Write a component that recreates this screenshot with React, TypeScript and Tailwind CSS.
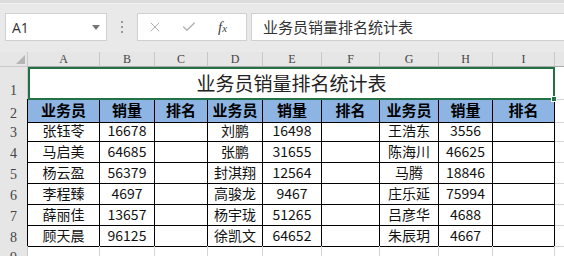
import { ChevronDown, Check, X } from 'lucide-react'

const GRID = 'grid grid-cols-[28px_72px_55px_53px_55px_59px_58px_59px_54px_62px_1fr]'
const CJK = "font-['Noto_Sans_CJK_SC',sans-serif]"

const letters = ['A', 'B', 'C', 'D', 'E', 'F', 'G', 'H', 'I']

const rows = [
  ['张钰苓', '16678', '刘鹏', '16498', '王浩东', '3556'],
  ['马启美', '64685', '张鹏', '31655', '陈海川', '46625'],
  ['杨云盈', '56379', '封淇翔', '12564', '马腾', '18846'],
  ['李程臻', '4697', '高骏龙', '9467', '庄乐延', '75994'],
  ['薛丽佳', '13657', '杨宇珑', '51265', '吕彦华', '4688'],
  ['顾天晨', '96125', '徐凯文', '64652', '朱辰玥', '4667'],
]

function RowHead({ n, dark }: { n: number; dark?: boolean }) {
  return (
    <div
      className={`bg-[#e6e6e6] border-b border-[#c8c8c8] border-r ${dark ? 'border-r-black' : 'border-r-[#c8c8c8]'} flex items-end justify-center pb-[1px] text-[14px] leading-none text-[#444] font-['Liberation_Serif',serif]`}
    >
      {n}
    </div>
  )
}

function Cell({ children, bold }: { children?: React.ReactNode; bold?: boolean }) {
  return (
    <div
      className={`border-r border-b border-black flex items-center justify-center ${CJK} ${
        bold ? 'bg-[#8db4e2] font-bold text-[15px] text-black' : 'text-[14px] text-[#111]'
      }`}
    >
      {children}
    </div>
  )
}

export default function App() {
  return (
    <div className="w-[564px] h-[256px] overflow-hidden bg-[#e9e9e9] flex flex-col">
      {/* Formula bar */}
      <div className="h-[4px] bg-[#dcdcdc] border-b border-[#f4f4f4] shrink-0" />
      <div className="h-[48px] shrink-0 flex items-start pt-[9px] pl-[5px] gap-0">
        <div className="w-[102px] h-[28px] bg-white border border-[#d0d0d0] flex items-center justify-between pl-[6px] pr-[6px]">
          <span className="text-[14px] text-[#333] font-['Open_Sans',sans-serif]">A1</span>
          <svg width="8" height="5" viewBox="0 0 8 5">
            <path d="M0 0 L8 0 L4 5 Z" fill="#777" />
          </svg>
        </div>
        <div className="w-[30px] h-[28px] flex flex-col items-center justify-center gap-[3px]">
          <span className="w-[2px] h-[2px] bg-[#999]" />
          <span className="w-[2px] h-[2px] bg-[#999]" />
          <span className="w-[2px] h-[2px] bg-[#999]" />
        </div>
        <div className="w-[110px] h-[28px] bg-white border border-[#d0d0d0] flex items-center pl-[9px] gap-[18px]">
          <X className="w-[16px] h-[16px] text-[#b0b0b0]" strokeWidth={1.5} />
          <Check className="w-[16px] h-[16px] text-[#b0b0b0]" strokeWidth={2} />
          <span className="ml-[3px] text-[15px] italic text-[#444] font-['Liberation_Serif',serif]">
            f<span className="text-[11px]">x</span>
          </span>
        </div>
        <div className="ml-[4px] flex-1 h-[28px] bg-white border border-[#d0d0d0] border-r-0 flex items-center pl-[11px]">
          <span className={`text-[15px] text-[#333] ${CJK}`}>业务员销量排名统计表</span>
        </div>
      </div>

      {/* Sheet */}
      <div className="flex-1 bg-white">
        {/* column headers */}
        <div className={`${GRID} h-[15px]`}>
          <div className="bg-[#e6e6e6] border-r border-b border-[#c8c8c8] flex items-end justify-end pr-[2px] pb-[2px]">
            <svg width="9" height="9" viewBox="0 0 9 9">
              <path d="M9 0 L9 9 L0 9 Z" fill="#b5b5b5" />
            </svg>
          </div>
          {letters.map((l) => (
            <div
              key={l}
              className="bg-[#e6e6e6] border-r border-b border-[#c8c8c8] border-b-[#ababab] flex items-center justify-center text-[12px] leading-none text-[#444] font-['Liberation_Serif',serif]"
            >
              {l}
            </div>
          ))}
          <div className="bg-[#e6e6e6] border-b border-[#ababab]" />
        </div>

        {/* row 1: merged title */}
        <div className={`${GRID} h-[32px]`}>
          <RowHead n={1} />
          <div className="col-span-9 relative border-2 border-[#217346] flex items-center justify-center">
            <span className={`text-[19px] text-[#222] ${CJK}`}>业务员销量排名统计表</span>
            <span className="absolute -right-[4px] -bottom-[4px] w-[6px] h-[6px] bg-[#217346] border border-white" />
          </div>
          <div className="border-b border-[#d4d4d4]" />
        </div>

        {/* row 2: headers */}
        <div className={`${GRID} h-[21px]`}>
          <RowHead n={2} dark />
          {[0, 1, 2].map((g) => (
            <>
              <Cell key={`a${g}`} bold>业务员</Cell>
              <Cell key={`b${g}`} bold>销量</Cell>
              <Cell key={`c${g}`} bold>排名</Cell>
            </>
          ))}
          <div className="border-b border-[#d4d4d4]" />
        </div>

        {rows.map((r, i) => (
          <div key={i} className={`${GRID} h-[21px]`}>
            <RowHead n={i + 3} dark />
            <Cell>{r[0]}</Cell>
            <Cell>{r[1]}</Cell>
            <Cell />
            <Cell>{r[2]}</Cell>
            <Cell>{r[3]}</Cell>
            <Cell />
            <Cell>{r[4]}</Cell>
            <Cell>{r[5]}</Cell>
            <Cell />
            <div className="border-b border-[#d4d4d4]" />
          </div>
        ))}

        {/* row 9 */}
        <div className={`${GRID} h-[21px]`}>
          <RowHead n={9} />
          {letters.map((l) => (
            <div key={l} className="border-r border-b border-[#d4d4d4]" />
          ))}
          <div className="border-b border-[#d4d4d4]" />
        </div>
      </div>
    </div>
  )
}
